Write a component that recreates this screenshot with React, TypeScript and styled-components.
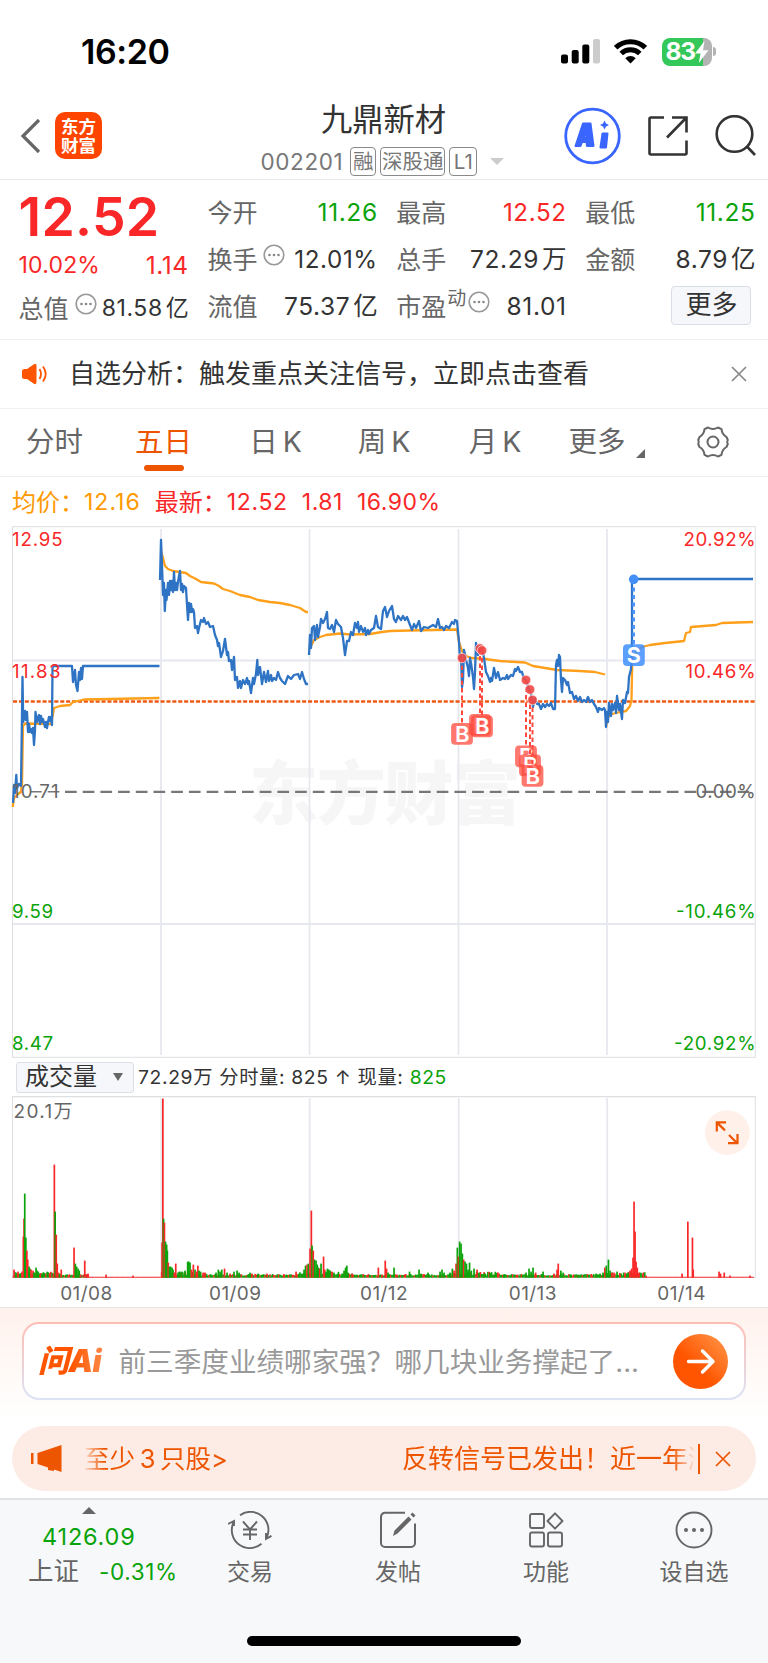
import React from 'react';
import styled, { createGlobalStyle } from 'styled-components';

const GlobalStyle = createGlobalStyle`
  * { box-sizing: border-box; }
  body { margin: 0; background: #fff; }
  svg { display: block; flex: none; }
`;

const RED = '#f92727';
const GREEN = '#0aa30a';
const ORANGE = '#ee5500';
const FONT = "Inter, 'Noto Sans CJK SC', sans-serif";

const Page = styled.main`
  width: 768px;
  height: 1663px;
  overflow: hidden;
  display: flex;
  flex-direction: column;
  background: #fff;
  color: #333;
  font-family: ${FONT};
  white-space: nowrap;
`;

const Txt = styled.span<{ $s: number; $c?: string; $ls?: number; $w?: number; $ml?: number }>`
  font-size: ${p => p.$s}px;
  line-height: 1.2;
  color: ${p => p.$c || 'inherit'};
  letter-spacing: ${p => p.$ls || 0}px;
  font-weight: ${p => p.$w || 400};
  margin-left: ${p => p.$ml || 0}px;
  white-space: pre;
  flex: none;
`;

/* ---------- status bar ---------- */
const StatusBar = styled.div`
  height: 90px;
  padding: 14px 52px 0 81px;
  display: flex;
  align-items: center;
  justify-content: space-between;
  color: #000;
`;
const StatusIcons = styled.div`
  display: flex;
  align-items: center;
  padding-bottom: 1px;
`;
const WifiIcon = styled.svg`
  margin-left: 14px;
`;
const Battery = styled.div`
  display: flex;
  align-items: center;
  margin-left: 15px;
`;
const BatteryBody = styled.div`
  width: 50px;
  height: 28px;
  border-radius: 8px;
  background: linear-gradient(90deg, #34c759 41px, #b3b3b3 41px);
  display: flex;
  align-items: center;
  padding-left: 4px;
  color: #fff;
`;
const BatteryNub = styled.div`
  width: 3px;
  height: 9px;
  margin-left: 1.5px;
  border-radius: 0 4px 4px 0;
  background: #b3b3b3;
`;

/* ---------- header ---------- */
const Header = styled.header`
  height: 90px;
  border-bottom: 1px solid #e8e8e8;
  display: grid;
  grid-template-columns: 230px 307px 231px;
`;
const HeaderLeft = styled.div`
  display: flex;
  align-items: center;
  padding: 2px 0 0 20px;
  gap: 14px;
`;
const Logo = styled.div`
  width: 47px;
  height: 47px;
  border-radius: 10px;
  background: #ff4400;
  color: #fff;
  font: 700 17.5px/19px 'Noto Sans CJK SC', sans-serif;
  padding-top: 4px;
  text-align: center;
`;
const HeaderMid = styled.div`
  display: flex;
  flex-direction: column;
  align-items: center;
  padding-top: 12px;
`;
const CodeRow = styled.div`
  display: flex;
  align-items: center;
  height: 30px;
  margin-top: 7px;
  width: 246px;
  color: #777;
`;
const Tag = styled.span<{ $w: number; $ml: number }>`
  width: ${p => p.$w}px;
  height: 29px;
  margin-left: ${p => p.$ml}px;
  border: 1.3px solid #8a8a8a;
  border-radius: 4px;
  font-size: 20.5px;
  line-height: 27px;
  display: flex;
  justify-content: center;
  flex: none;
`;
const DownCaret = styled.i`
  margin-left: 13px;
  border: 7px solid transparent;
  border-top: 7px solid #ccc;
  border-bottom: 0;
`;
const HeaderRight = styled.div`
  display: flex;
  align-items: center;
  gap: 26px;
  padding: 2px 0 0 27px;
`;

/* ---------- quote ---------- */
const Quote = styled.section`
  height: 160px;
  border-bottom: 1px solid #f0f0f0;
  padding: 9px 12.500px 0 18.5px;
  display: grid;
  grid-template-columns: repeat(4, 170.300px);
  column-gap: 18.600px;
`;
const QuoteCol = styled.div`
  display: flex;
  flex-direction: column;
`;
const QuoteCell = styled.div<{ $h?: number; $c?: string }>`
  height: ${p => p.$h || 47}px;
  display: flex;
  align-items: center;
  justify-content: space-between;
  color: ${p => p.$c || '#333'};
`;
const Label = styled.span`
  display: flex;
  align-items: center;
  font-size: 25px;
  line-height: 30px;
  color: #666;
`;
const Sup = styled.span`
  font-size: 19px;
  line-height: 20px;
  margin: -16px -4px 0 1px;
`;
const InfoIcon = styled.svg`
  margin: -10px 0 0 6px;
`;
const Unit = styled.span`
  margin-left: 3px;
  letter-spacing: 0;
`;
const MoreButton = styled.button`
  width: 80px;
  height: 39px;
  margin: -2px 4px 0 auto;
  padding: 0 0 1px;
  background: #f6f7fa;
  border: 1px solid #d9dde5;
  border-radius: 4px;
  color: #333;
  font: 400 26px/30px ${FONT};
`;

/* ---------- notice and tabs ---------- */
const Notice = styled.div`
  height: 69px;
  border-bottom: 1px solid #f0f0f0;
  display: flex;
  align-items: center;
  padding: 0 21px 1px 21px;
`;
const NoticeText = styled.span`
  font-size: 26px;
  line-height: 32px;
  margin-left: 21px;
  flex: 1;
`;
const Tabs = styled.nav`
  height: 68px;
  border-bottom: 1px solid #eee;
  display: grid;
  grid-template-columns: 109px 109px 115px 102px 120px 94px 119px;
`;
const Tab = styled.div<{ $active?: boolean }>`
  display: flex;
  flex-direction: column;
  align-items: center;
  padding-top: 16px;
  font-size: 28.5px;
  line-height: 34px;
  word-spacing: -3px;
  color: ${p => (p.$active ? ORANGE : '#666')};
  &::after {
    content: '';
    width: 40px;
    height: 6px;
    margin-top: 6px;
    border-radius: 3px;
    background: ${p => (p.$active ? ORANGE : 'transparent')};
  }
`;
const TabMore = styled.span`
  display: flex;
  align-items: flex-end;
  gap: 10px;
  margin-left: 9px;
  i { border-left: 9px solid transparent; border-bottom: 9px solid #666; margin-bottom: 1px; }
`;
const GearIcon = styled.svg`
  margin-left: 9px;
`;
const AvgRow = styled.div`
  height: 49px;
  display: flex;
  align-items: center;
  padding: 3px 0 0 12px;
  color: ${RED};
`;

/* ---------- volume ---------- */
const VolumeHead = styled.div`
  height: 38px;
  display: flex;
  align-items: center;
  padding-left: 16px;
`;
const Selector = styled.div`
  width: 118px;
  height: 31px;
  background: #f6f7fa;
  border: 1px solid #dcdfe5;
  border-radius: 3px;
  display: flex;
  align-items: center;
  justify-content: space-between;
  padding: 0 10px 0 8px;
  font-size: 24px;
  line-height: 28px;
  i { border: 5px solid transparent; border-top: 8px solid #666; border-bottom: 0; }
`;
const VolumeInfo = styled.div`
  display: flex;
  padding: 2px 0 0 4px;
`;
const Dates = styled.div`
  height: 30px;
  padding: 4px 12px 0;
  display: grid;
  grid-template-columns: repeat(5, 1fr);
  align-items: center;
  text-align: center;
  border-bottom: 1px solid #e6e3e3;
  color: #666;
`;

/* ---------- assistant ---------- */
const AskArea = styled.section`
  height: 118px;
  padding: 14px 22px 0;
  background: linear-gradient(#fff1ec, #fff9f6 50%, #fff 95%);
`;
const AskBox = styled.div`
  height: 78px;
  border: 2px solid transparent;
  border-radius: 17px;
  background: linear-gradient(#fff, #fff) padding-box, linear-gradient(#ffbdb3, #dbe3f5) border-box;
  display: flex;
  align-items: center;
  justify-content: space-between;
  padding: 0 16px 0 14px;
`;
const AskLogo = styled.span`
  width: 66px;
  font: italic 900 31px/36px Inter, 'Noto Sans CJK SC', sans-serif;
  letter-spacing: -0.6px;
  color: transparent;
  background: linear-gradient(90deg, #ff5500 50%, #ff8a4a);
  background-clip: text;
`;
const AskText = styled.span`
  width: 535px;
  margin-left: -5px;
  padding-top: 1px;
  font-size: 27.6px;
  line-height: 36px;
  color: #999;
`;
const Ticker = styled.div`
  height: 65px;
  margin: 0 12px 7px;
  border-radius: 33px;
  background: #fdece5;
  color: ${ORANGE};
  display: flex;
  align-items: center;
  padding: 0 25px 0 19px;
`;
const TickerView = styled.div`
  width: 616px;
  margin-left: 20px;
  overflow: hidden;
  display: flex;
  align-items: center;
  padding-top: 1px;
  mask-image: linear-gradient(90deg, transparent, #000 22px, #000 590px, transparent 614px);
`;
const TickerLink = styled.span`
  width: 318px;
  margin-left: 2px;
  flex: none;
  font-size: 25.5px;
  line-height: 32px;
  word-spacing: -2.500px;
`;
const TickerNews = styled.span`
  flex: none;
  font-size: 26px;
  line-height: 32px;
`;
const Divider = styled.i`
  width: 1.5px;
  height: 30px;
  margin-right: auto;
  background: ${ORANGE};
`;

/* ---------- bottom nav ---------- */
const Bottom = styled.footer`
  flex: 1;
  background: #f7f8fa;
  border-top: 2px solid #e3e3e3;
  display: flex;
  flex-direction: column;
  align-items: center;
`;
const NavRow = styled.div`
  width: 100%;
  height: 136px;
  display: grid;
  grid-template-columns: 176px repeat(4, 148px);
  color: #666;
`;
const NavItem = styled.div`
  display: flex;
  flex-direction: column;
  align-items: center;
  padding-top: 11px;
  font-size: 23px;
  line-height: 28px;
  svg { margin-bottom: 9px; }
`;
const IndexItem = styled.div`
  display: flex;
  flex-direction: column;
  padding: 7px 0 0 28px;
`;
const UpCaret = styled.i`
  border: 7px solid transparent;
  border-bottom: 7px solid #666;
  border-top: 0;
  width: 0;
  margin: 0 0 6px 54px;
`;
const IndexLine = styled.div`
  display: flex;
  align-items: center;
  height: 34px;
`;
const HomeBar = styled.div`
  width: 274px;
  height: 10px;
  border-radius: 5px;
  background: #000;
`;

const Dots = () => (
  <InfoIcon width="22" height="22" viewBox="0 0 22 22">
    <circle cx="11" cy="11" r="9.8" fill="none" stroke="#999" strokeWidth="1.6" />
    {[6.5, 11, 15.5].map(x => <circle key={x} cx={x} cy="11" r="1.3" fill="#888" />)}
  </InfoIcon>
);

const Num = ({ v, unit, c, s = 24.5 }: { v: string; unit?: string; c?: string; s?: number }) => (
  <Txt $s={s} $c={c} $ls={0.6}>{v}{unit && <Unit>{unit}</Unit>}</Txt>
);

const Close = ({ color, w }: { color: string; w: number }) => (
  <svg width="16" height="16" viewBox="0 0 16 16" stroke={color} strokeWidth={w}>
    <path d="M1 1 15 15M15 1 1 15" />
  </svg>
);

const BLUE_LINES = [
  '13,803 14,785 15,793 16.3,775 17,788 19,784 21,786 21.8,730 22.5,677 23.2,722 24,717 25,711 26,720 27,712 28,732 29,724 30,732 31,729 32,733 33,728 34,745 35,730 35.5,712 37,722 38,718 39,715 40,724 41,716 42,722 43,719 45,727 46,722 47,728 48,722 49,717 50,721 51,717 52,725 52.5,668 53,666 72,666 73,682 75,670 76,685 77.5,691 79,672 80,680 81,668 82,679 83,666 159.5,666',
  '160,580 161,540 162,565 163,595 164,583 164.8,611 166,590 166.5,600 168,583 169,595 170,581 171,590 172,581 173,592 174,572 175,590 176,583 177,590 178,582 179,576 180,571 181,590 182,584 183,592 184,586 186,588 187,605 188,620 189,603 190,612 191,604 192,612 193,609 194,612 195,628 197,626 198,633 199,628 201,620 203,622 204,618 206,624 208,622 210,627 213,626 215,635 217,640 218,646 219,643 221,657 223,651 225,639 227,655 228,652 229,661 231,660 232,670 234,657 235,680 237,677 238,688 240,681 241,688 243,680 245,684 247,678 248,684 249,681 251,693 253,678 254,684 256,674 257.3,660 258,675 260,667 262,684 264,672 266,682 268,671 269,681 271,675 272,681 274,678 276,680 278,672 280,678 282,681 285,684 288,676 291,679 294,675 298,674 300,679 302,672 304,679 306,684 308,684',
  '309,655 310,635 311,648 312,628 314,626 315,640 317,625 318,637 320,627 321,619 323,623 325,619 327,612 328,628 330,629 332,625 334,632 336,620 338,624 341,627 343,638 345,655 347,641 349,641 351,632 353,635 355,623 357,628 358,622 359,632 361,626 363,632 365,628 366,635 368,630 369,634 371,630 374,628 376,616 378,627 381,629 383,611 385,607 387,617 389,611 392,606 394,619 396,622 398,616 401,620 403,616 405,620 407,617 410,625 412,630 414,624 416,628 419,621 421,631 424,627 428,628 433,625 436,627 438,619 440,628 442,627 444,630 446,626 449,628 452,622 454,624 455,620 457,621 459,642 460,660 461,655 462,687 463,680 464,650 465,655 466,660 468,668 469,676 470,658 471,663 473,677 474,689 475,672 476,643 478,655 480,650 482,648 484,658 486,672 488,676 490,682 491,678 492,681 494,668 496,678 498,672 500,680 503,678 505,679 507,675 508,679 511,675 513,676 515,669 516,671 518,667 520,672 522,672 524,679 526,680 529,690 531,694 533,707 535,698 537,704 539,704 541,709 543,704 545,707 547,704 549,706 551,703 553,709 555,709 556,665 557,660 558,666 559,655 560,657 561,680 562,692 563,678 565,680 567,685 568,682 570,693 572,692 574,699 576,696 578,701 580,697 582,702 584,700 586,702 588,697 590,702 592,700 594,704 596,707 598,712 599,708 602,710 604,708 605,710 606,727 607,712 608,722 609,703 611,716 612,704 613,710 615,703 616,713 617,696 619,710 620,704 622,719 623,700 625,703 627,692 628,693 629,677 631,669 632,640 632,579 753,579',
];

const AVG_LINES = [
  '12.7,807 14,798 18,794 21,792 22,783 23,726 25,723.5 51,724 53,714 54,708 60,706 70,705 73,702 80,700.5 85,699.5 159.5,698',
  '161,551 163,558 165,566 168,569 173,571 186,573 190,576 196,579 201,582 214,583.5 219,586 223,589 230,591 240,595 250,597 258,600 270,602 280,603 290,605 300,608 306,612 308,612',
  '310,648 314,640 320,637 326,635 340,633.5 350,634.5 370,634 382,632 390,631 410,630.5 457,629.5 459,642 462,651 466,656 472,658 485,659 500,661 525,662.5 533,666 545,668 557,670 580,671 595,672 605,674.5',
  '606,727 608,717 612,714 620,712 626,711 630,706 631.5,700 632.3,660 636,652 642,647 650,645 665,643 684,641 686,633 690,632 691,627 716,625 722,623 753,622',
];

const LABELS: { y: number; c: string; l: string; lw: number; r: string; rw: number }[] = [
  { y: 545.5, c: RED, l: '12.95', lw: 50.5, r: '20.92%', rw: 72 },
  { y: 678, c: RED, l: '11.83', lw: 48.5, r: '10.46%', rw: 70 },
  { y: 798, c: '#666', l: '10.71', lw: 46.5, r: '0.00%', rw: 60 },
  { y: 917.5, c: GREEN, l: '9.59', lw: 41, r: '-10.46%', rw: 79.5 },
  { y: 1049.5, c: GREEN, l: '8.47', lw: 41, r: '-20.92%', rw: 81.5 },
];

const BUYS = [
  { x: 462, dot: 658, box: 723 },
  { x: 480, dot: 648.5, box: 714 },
  { x: 482, dot: 650.5, box: 715.5 },
  { x: 526, dot: 680, box: 745.5 },
  { x: 530, dot: 689.5, box: 754.5 },
  { x: 532.5, dot: 700, box: 765 },
];

const DAY_X = [161, 309.5, 458.5, 607];

const PriceChart = () => (
  <svg width="768" height="532" viewBox="0 526 768 532" fontFamily={FONT}>
    <text x="249" y="819" fontSize="69" fontWeight="900" fill="#f6f6f7" textLength="272">东方财富</text>
    <g stroke="#e6e8ee" strokeWidth="1.8">
      {DAY_X.map(x => <path key={x} d={`M${x} 529V1055`} />)}
      <path d="M12 660.5H755M12 924H755" />
    </g>
    <rect x="12.5" y="526.7" width="742.7" height="530.6" fill="none" stroke="#dedfe3" />
    <path d="M65 791.8H755" stroke="#777" strokeWidth="2.2" strokeDasharray="11.7 6" />
    <path d="M30 791.8H60" stroke="#777" strokeWidth="1.6" strokeDasharray="11.7 6" />
    <path d="M13 701.5H755" stroke="#ee5a14" strokeWidth="2.3" strokeDasharray="4.1 1.8" />
    <g fill="none" strokeWidth="2.3" strokeLinejoin="round">
      {AVG_LINES.map(p => <polyline key={p} points={p} stroke="#ff9f1a" />)}
      {BLUE_LINES.map(p => <polyline key={p} points={p} stroke="#2f74c4" />)}
    </g>
    {LABELS.map(r => (
      <g key={r.y} fill={r.c} fontSize="18.7">
        <text x="12" y={r.y} textLength={r.lw}>{r.l}</text>
        <text x={755.5 - r.rw} y={r.y} textLength={r.rw}>{r.r}</text>
      </g>
    ))}
    {BUYS.map(b => (
      <g key={b.x}>
        <path d={`M${b.x} ${b.dot}V${b.box}`} stroke="#ff4a40" strokeWidth="2" strokeDasharray="4.5 3" />
        <circle cx={b.x} cy={b.dot} r="4.8" fill="#f04a48" fillOpacity=".9" stroke="#fff" strokeWidth=".6" />
        <rect x={b.x - 10.9} y={b.box} width="21.8" height="21.8" rx="4" fill="#ff4b3e" fillOpacity=".75" />
        <text x={b.x + 0.3} y={b.box + 18.6} textAnchor="middle" fontSize="22" fontWeight="600" fill="#fff">B</text>
      </g>
    ))}
    <path d="M633.7 580V645" stroke="#4c97ff" strokeWidth="2.6" strokeDasharray="4 3.5" />
    <circle cx="633.7" cy="579.3" r="4.8" fill="#438ef7" />
    <rect x="623" y="644.3" width="21.8" height="21.8" rx="4" fill="#3f8fff" fillOpacity=".85" />
    <text x="633.9" y="663" textAnchor="middle" fontSize="21.5" fontWeight="700" fill="#fff">S</text>
  </svg>
);

// x, height and colour of the taller volume bars; quiet minutes fill in between
const SPIKES =
  '14,8r 16,5g 18,6r 20,4g 22,6r 23.3,41r 24,59r 24.7,84g 25.8,40g 26.8,27r 27.7,18r 29,11g 30,9g 31,8r 33,7r 34,5g 36,10g 37,7g 38,6g 40,3r 42,3g 50,4r 53.4,4r 54.3,113r 55.1,66g 56.2,43r 57.2,14r 58.4,5r 59.5,4g 61.2,8r 74,30r 75.3,14g 76.6,11g 78,9g 79.2,7g 80.5,3r 84.7,17r 86,3r 88,4r 106,3r 133,2r 162,35r 162.8,179r 163.5,59g 164.4,55r 165.5,36g 166.6,33g 167.3,27g 168.2,15r 169.4,11g 170.6,11g 172,10g 173,8g 174.2,5r 175.7,14r 178,5g 180,6g 182,6g 185,7g 187.6,16g 188.8,16g 190,15g 191.4,8r 193.3,13r 195,8g 196.4,6r 197.8,12r 199,7g 200.5,6g 203,5r 205,5r 216,5g 218.3,8g 220,6g 221.7,8g 224.5,9r 227,5g 230,4r 234,6g 237,7g 239,5g 250,5g 252,4r 258,4g 267,4r 284,3r 296,6r 299,4g 302,4g 304,8g 305.5,12g 307,13r 308.4,14g 310,29r 311.3,67r 312,32g 313.2,27r 314.5,18g 316,17g 317.2,13g 318.5,10g 319.7,9r 321,14g 323.5,21r 324.7,8r 326,6g 327.4,9g 328.8,8g 330,7g 332,6r 334,5g 338,4g 342,4g 344,7g 345.5,10g 346.8,12g 348,5g 352,4r 378.3,10r 382,3r 385.2,17r 386.5,9r 388,5g 394,10g 397,3r 409.5,6g 419,8g 421,4g 428,5g 440,6g 442,8g 444,5g 450,5g 452.3,9g 454,7r 456,14r 457.3,30g 458.4,21r 459.6,36g 461,34g 462.3,24g 463.6,18r 465,16g 466.4,14g 468,8g 469.5,15g 471.3,7g 474,9g 477,8r 479,5g 484,4g 490,4g 494,3g 504,3g 526,5g 529,9g 531,6g 533,10g 535.6,5r 543,6g 554,4r 557,8r 558.2,14r 560.8,7g 563,5g 571,3g 578,3g 596,4g 600,4g 603,5g 604.8,10r 606.3,12g 608.4,18g 610,7g 612,5r 614,5r 617,6g 620,3r 625,5r 628,5g 630,7r 631.6,9r 633,20r 634,76r 635,46r 636,16r 637.2,10r 639,5r 643,4r 646,2r 682,4r 687.8,56r 692.4,40r 693.2,8r 719,6r 720.5,4r 724.2,5r 730,2r 750,2r';

const BARS = SPIKES.split(' ').map(s => {
  const m = s.match(/([\d.]+),(\d+)(\w)/)!;
  return { x: +m[1], h: +m[2], c: m[3] === 'r' ? '#f92727' : '#0aa30a' };
});
const QUIET = Array.from({ length: 595 }, (_, i) => {
  const x = 13.5 + i * 1.245;
  const r = Math.abs(Math.sin(i * 12.9898) * 43758.5453) % 1;
  const still = (x > 89 && x < 161) || x > 645;
  const phase = ((x - 161 + 148.7) % 148.7) / 148.7;
  const h = still ? 0.8 : 1.9 + r * (phase < 0.3 || phase > 0.93 ? 4 : 1.8);
  return { x, h, c: still || (i * 7 + Math.floor(i / 3)) % 10 < 3 ? '#f92727' : '#0aa30a' };
});

const VolumeChart = () => (
  <svg width="768" height="182" viewBox="0 1096 768 182" fontFamily={FONT}>
    <g stroke="#e6e8ee" strokeWidth="1.8">
      {DAY_X.map(x => <path key={x} d={`M${x + 0.2} 1098V1277`} />)}
    </g>
    <path d="M12.5 1278V1096H755.3V1278" fill="none" stroke="#dedfe3" />
    <path d="M12 1096.5H755.5M12 1277.6H755.5" stroke="#dedfe3" strokeWidth="1.4" />
    {[...QUIET, ...BARS].map((b, i) => (
      <rect key={i} x={b.x - 0.8} y={1277.6 - b.h} width="1.7" height={b.h} fill={b.c} />
    ))}
    <text x="13.5" y="1118" fontSize="19" fill="#666" textLength="59">20.1万</text>
    <circle cx="727.3" cy="1132.6" r="22.4" fill="#fff0ea" />
    <path d="M716.8 1131.5V1122.4H726M717 1122.6 725 1130.4M728 1143.2H737.5V1134M737 1143 729 1135" fill="none" stroke={ORANGE} strokeWidth="2.2" />
  </svg>
);

export default function App() {
  return (
    <Page>
      <GlobalStyle />
      <StatusBar>
        <Txt $s={34} $w={600} $ls={-0.4}>16:20</Txt>
        <StatusIcons>
          <svg width="39" height="25" viewBox="0 0 39 25">
            <rect x="0" y="15.5" width="7" height="9" rx="2" />
            <rect x="10.7" y="11" width="7" height="13.5" rx="2" />
            <rect x="21.3" y="5.5" width="7" height="19" rx="2" />
            <rect x="32" y="0" width="7" height="24.5" rx="2" fill="#ccc" />
          </svg>
          <WifiIcon width="33" height="25" viewBox="0 0 33 25" fill="none" stroke="#000" strokeWidth="5">
            <path d="M1.7 8.7A21.3 21.3 0 0 1 31.3 8.7" />
            <path d="M7.2 14.5A13.4 13.4 0 0 1 25.8 14.5" />
            <path d="M16.5 24.5 11.3 19.2A7.4 7.4 0 0 1 21.7 19.2Z" fill="#000" stroke="none" />
          </WifiIcon>
          <Battery>
            <BatteryBody>
              <Txt $s={24.5} $w={700} $ls={-1.3}>83</Txt>
              <svg width="14" height="22" viewBox="0 0 14 22" fill="#fff"><path d="M9.500 0 0 12.500H5.500L3.800 22 13.500 9.300H8Z" /></svg>
            </BatteryBody>
            <BatteryNub />
          </Battery>
        </StatusIcons>
      </StatusBar>

      <Header>
        <HeaderLeft>
          <svg width="21" height="36" viewBox="0 0 21 36" fill="none" stroke="#666" strokeWidth="3.200"><path d="M19 2 3 18 19 34" /></svg>
          <Logo>东方<br />财富</Logo>
        </HeaderLeft>
        <HeaderMid>
          <Txt $s={31.3}>九鼎新材</Txt>
          <CodeRow>
            <Txt $s={22.5} $ls={0.6}>002201</Txt>
            <Tag $w={26} $ml={7}>融</Tag>
            <Tag $w={65} $ml={4}>深股通</Tag>
            <Tag $w={28} $ml={4}>L1</Tag>
            <DownCaret />
          </CodeRow>
        </HeaderMid>
        <HeaderRight>
          <svg width="57" height="58" viewBox="0 0 57 58">
            <circle cx="28.5" cy="29" r="26.8" fill="none" stroke="#3a66ff" strokeWidth="2.8" />
            <g fill="#3a66ff" stroke="#3a66ff" strokeWidth="2" strokeLinejoin="round">
              <path fillRule="evenodd" d="M19 16.500H26.500L29.500 39H23L22.500 35H18L16.500 39H11.500ZM22.800 23.500 19.800 30.500H23Z" />
              <path d="M38.500 26.500H43.500L42 40.500H36.500Z" />
            </g>
            <path d="M40.500 13.500 42 16.500 45 18 42 19.500 40.500 22.500 39 19.500 36 18 39 16.500Z" fill="#3a66ff" />
          </svg>
          <svg width="42" height="42" viewBox="0 0 42 42" fill="none" stroke="#333" strokeWidth="2.6">
            <path d="M17 2.500H4A1.500 1.500 0 0 0 2.500 4V38A1.500 1.500 0 0 0 4 39.500H38A1.500 1.500 0 0 0 39.500 38V25.500M25 2.500H39.500V17.500M39 3 20 22.500" />
          </svg>
          <svg width="42" height="42" viewBox="0 0 42 42" fill="none" stroke="#333" strokeWidth="2.6">
            <circle cx="19.500" cy="19" r="17.800" />
            <path d="M31.500 31 40 40" />
          </svg>
        </HeaderRight>
      </Header>

      <Quote>
        <QuoteCol>
          <QuoteCell $h={56} $c={RED}><Txt $s={53.5} $w={600} $ls={0.3}>12.52</Txt></QuoteCell>
          <QuoteCell $h={42} $c={RED}><Txt $s={23} $ls={0.2}>10.02%</Txt><Num v="1.14" /></QuoteCell>
          <QuoteCell $h={43}><Label>总值<Dots /></Label><Num v="81.58" unit="亿" s={23} /></QuoteCell>
        </QuoteCol>
        <QuoteCol>
          <QuoteCell><Label>今开</Label><Num v="11.26" c={GREEN} /></QuoteCell>
          <QuoteCell><Label>换手<Dots /></Label><Num v="12.01%" s={24.2} /></QuoteCell>
          <QuoteCell><Label>流值</Label><Num v="75.37" unit="亿" /></QuoteCell>
        </QuoteCol>
        <QuoteCol>
          <QuoteCell><Label>最高</Label><Num v="12.52" c={RED} s={24.2} /></QuoteCell>
          <QuoteCell><Label>总手</Label><Num v="72.29" unit="万" /></QuoteCell>
          <QuoteCell><Label>市盈<Sup>动</Sup><Dots /></Label><Num v="81.01" /></QuoteCell>
        </QuoteCol>
        <QuoteCol>
          <QuoteCell><Label>最低</Label><Num v="11.25" c={GREEN} /></QuoteCell>
          <QuoteCell><Label>金额</Label><Num v="8.79" unit="亿" /></QuoteCell>
          <QuoteCell><MoreButton>更多</MoreButton></QuoteCell>
        </QuoteCol>
      </Quote>

      <Notice>
        <svg width="27" height="22" viewBox="0 0 27 22">
          <path d="M1 8.500Q1 6 3.500 6H6L13 1.200Q15.500 0 15.500 3V19Q15.500 22 13 20.800L6 16H3.500Q1 16 1 13.500Z" fill="#ff5500" />
          <path d="M18.500 6Q21.500 11 18.500 16M22 3.500Q27.500 11 22 18.500" fill="none" stroke="#ff5500" strokeWidth="1.800" />
        </svg>
        <NoticeText>自选分析：触发重点关注信号，立即点击查看</NoticeText>
        <Close color="#888" w={1.7} />
      </Notice>

      <Tabs>
        <Tab>分时</Tab>
        <Tab $active>五日</Tab>
        <Tab>日 K</Tab>
        <Tab>周 K</Tab>
        <Tab>月 K</Tab>
        <Tab><TabMore>更多<i /></TabMore></Tab>
        <Tab>
          <GearIcon width="34" height="34" viewBox="0 0 34 34" fill="none" stroke="#666" strokeWidth="2" strokeLinejoin="round">
            <path d="M12 2.500Q17 5.500 22 2.500L25.500 4.200Q26 9.500 30.500 12L31.800 15Q30.500 17 31.800 19L30.500 22Q26 24.500 25.500 29.800L22 31.500Q17 28.500 12 31.500L8.500 29.800Q8 24.500 3.500 22L2.200 19Q3.500 17 2.200 15L3.500 12Q8 9.500 8.500 4.200Z" />
            <circle cx="17" cy="17" r="5.500" />
          </GearIcon>
        </Tab>
      </Tabs>

      <AvgRow>
        <Txt $s={24} $c="#ff9900">均价：</Txt>
        <Txt $s={23} $c="#ff9900" $ls={1}>12.16</Txt>
        <Txt $s={24} $ml={14}>最新：</Txt>
        <Txt $s={23} $ls={0.7}>12.52</Txt>
        <Txt $s={23} $ls={0.5} $ml={14}>1.81</Txt>
        <Txt $s={23} $ls={0.5} $ml={14}>16.90%</Txt>
      </AvgRow>

      <PriceChart />

      <VolumeHead>
        <Selector>成交量<i /></Selector>
        <VolumeInfo>
          <Txt $s={19.3} $ls={0.65}>72.29万 分时量: 825 ↑ 现量: </Txt>
          <Txt $s={19.3} $ls={0.6} $c={GREEN}>825</Txt>
        </VolumeInfo>
      </VolumeHead>
      <VolumeChart />
      <Dates>
        {['01/08', '01/09', '01/12', '01/13', '01/14'].map(d => <Txt key={d} $s={19} $ls={0.4}>{d}</Txt>)}
      </Dates>

      <AskArea>
        <AskBox>
          <AskLogo>问Ai</AskLogo>
          <AskText>前三季度业绩哪家强？哪几块业务撑起了...</AskText>
          <svg width="55" height="55" viewBox="0 0 55 55">
            <defs>
              <linearGradient id="go" x1="0" y1="1" x2="1" y2="0"><stop offset=".4" stopColor="#ff5500" /><stop offset="1" stopColor="#ff9a4d" /></linearGradient>
            </defs>
            <circle cx="27.500" cy="27.500" r="27.500" fill="url(#go)" />
            <path d="M15.500 27.500H39M29.500 17 40 27.500 29.500 38" fill="none" stroke="#fff" strokeWidth="3.400" strokeLinecap="round" strokeLinejoin="round" />
          </svg>
        </AskBox>
      </AskArea>

      <Ticker>
        <svg width="31" height="27" viewBox="0 0 31 27" fill={ORANGE}>
          <path d="M0 8H2.500V19H0ZM6.500 8 30.500 0V27L23 24.500V26L17 25V22.500L6.500 19Z" />
        </svg>
        <TickerView>
          <TickerLink>至少 3 只股&gt;</TickerLink>
          <TickerNews>反转信号已发出！近一年涨</TickerNews>
        </TickerView>
        <Divider />
        <Close color={ORANGE} w={1.7} />
      </Ticker>

      <Bottom>
        <NavRow>
          <IndexItem>
            <UpCaret />
            <IndexLine><Txt $s={23.5} $ls={0.8} $c={GREEN} $ml={14}>4126.09</Txt></IndexLine>
            <IndexLine><Txt $s={25.5}>上证</Txt><Txt $s={22.5} $ls={0.6} $c={GREEN} $ml={20}>-0.31%</Txt></IndexLine>
          </IndexItem>
          <NavItem>
            <svg width="44" height="38" viewBox="0 0 44 38" fill="none" stroke="#666" strokeWidth="1.900">
              <path d="M12 4.200A18 18 0 0 1 38.500 27M38 22V27.800L43.500 24.800M33.500 32.800A18 18 0 0 1 5.500 11.500M0 13 6 10V15" />
              <path d="M15 10.500 22 18.500 29 10.500M22 18.500V29M15 18.500H29M15 23.500H29" />
            </svg>
            交易
          </NavItem>
          <NavItem>
            <svg width="38" height="38" viewBox="0 0 38 38" fill="none" stroke="#666" strokeWidth="2">
              <path d="M26 1.800H6A4 4 0 0 0 2 5.800V32A4 4 0 0 0 6 36H32A4 4 0 0 0 36 32V12.500" />
              <path d="M14 25 15.500 19.500 29.500 5.500 32.500 8.500 18.500 22.500ZM31.500 3.500 33.500 1.500 36.500 4.500 34.500 6.500Z" fill="#666" stroke="none" />
            </svg>
            发帖
          </NavItem>
          <NavItem>
            <svg width="36" height="38" viewBox="0 0 36 38" fill="none" stroke="#666" strokeWidth="1.900" strokeLinejoin="round">
              <rect x="2" y="3" width="14" height="14" rx="2" />
              <rect x="2" y="21.500" width="14" height="14" rx="2" />
              <rect x="20" y="21.500" width="14" height="14" rx="2" />
              <path d="M27 2.300 34.500 10 27 17.700 19.500 10Z" />
            </svg>
            功能
          </NavItem>
          <NavItem>
            <svg width="38" height="38" viewBox="0 0 38 38">
              <circle cx="19" cy="19" r="17.500" fill="none" stroke="#666" strokeWidth="1.900" />
              {[11, 19, 27].map(x => <circle key={x} cx={x} cy="19" r="2" fill="#666" />)}
            </svg>
            设自选
          </NavItem>
        </NavRow>
        <HomeBar />
      </Bottom>
    </Page>
  );
}
